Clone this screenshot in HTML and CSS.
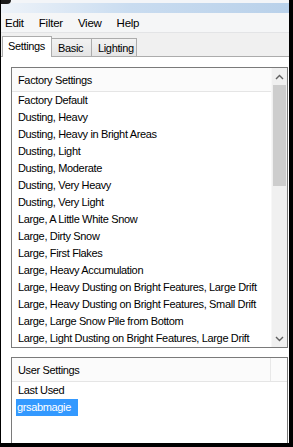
FILE: index.html
```html
<!DOCTYPE html>
<html>
<head>
<meta charset="utf-8">
<link rel="stylesheet" href="styles.css">
</head>
<body>
<div class="win">
  <div class="titlebar"><span class="corner"></span></div>
  <div class="menubar">
    <span class="menu-item">Edit</span>
    <span class="menu-item">Filter</span>
    <span class="menu-item">View</span>
    <span class="menu-item">Help</span>
  </div>
  <div class="tabs">
    <div class="tab active">Settings</div>
    <div class="tab">Basic</div>
    <div class="tab">Lighting</div>
  </div>
  <div class="panel">
    <div class="listbox factory">
      <div class="lb-main">
        <div class="lb-head"><span class="col">Factory Settings</span></div>
        <ul class="lb-items">
          <li>Factory Default</li>
          <li>Dusting, Heavy</li>
          <li>Dusting, Heavy in Bright Areas</li>
          <li>Dusting, Light</li>
          <li>Dusting, Moderate</li>
          <li>Dusting, Very Heavy</li>
          <li>Dusting, Very Light</li>
          <li>Large, A Little White Snow</li>
          <li>Large, Dirty Snow</li>
          <li>Large, First Flakes</li>
          <li>Large, Heavy Accumulation</li>
          <li>Large, Heavy Dusting on Bright Features, Large Drift</li>
          <li>Large, Heavy Dusting on Bright Features, Small Drift</li>
          <li>Large, Large Snow Pile from Bottom</li>
          <li>Large, Light Dusting on Bright Features, Large Drift</li>
        </ul>
      </div>
      <div class="scrollbar">
        <div class="sb-btn"><svg width="9" height="6" viewBox="0 0 9 6"><path d="M1 5 L4.5 1.5 L8 5" fill="none" stroke="#606060" stroke-width="1.4"/></svg></div>
        <div class="sb-thumb"></div>
        <div class="sb-track"></div>
        <div class="sb-btn"><svg width="9" height="6" viewBox="0 0 9 6"><path d="M1 1 L4.5 4.5 L8 1" fill="none" stroke="#606060" stroke-width="1.4"/></svg></div>
      </div>
    </div>
    <div class="listbox user">
      <div class="lb-main">
        <div class="lb-head"><span class="col">User Settings</span></div>
        <ul class="lb-items">
          <li>Last Used</li>
          <li><span class="sel">grsabmagie</span></li>
        </ul>
      </div>
    </div>
  </div>
</div>
</body>
</html>
```

FILE: styles.css
```css
* { box-sizing: border-box; }
html, body { margin: 0; padding: 0; }
body {
  background: #000;
  width: 293px;
  height: 447px;
  overflow: hidden;
  font-family: "Liberation Sans", Arial, sans-serif;
  font-size: 11px;
  letter-spacing: -0.35px;
  color: #000;
}
.win {
  position: relative;
  margin-left: 1px;
  width: 288px;
  height: 443px;
  background: #f0f0f0;
  display: flex;
  flex-direction: column;
  overflow: hidden;
}
.titlebar {
  height: 13px;
  border-top: 3px solid #f3f5f8;
  background: linear-gradient(to right, #eef3f9 0%, #c9dcf0 45%, #b9d1ea 100%);
  position: relative;
}
.corner {
  position: absolute;
  left: -1px;
  top: -3px;
  width: 11px;
  height: 4px;
  background: #1b1b1b;
  border-radius: 0 0 5px 0;
}
.menubar {
  height: 20px;
  background: #f5f6f7;
  border-bottom: 1px solid #e3e4e6;
  display: flex;
  align-items: center;
  gap: 15px;
  padding-left: 4px;
  font-size: 11.5px;
  letter-spacing: -0.25px;
}
.tabs {
  height: 24px;
  display: flex;
  align-items: flex-end;
  padding-left: 1px;
  border-bottom: 1px solid #acacac;
}
.tab {
  height: 18px;
  border: 1px solid #acacac;
  border-bottom: none;
  background: linear-gradient(#f2f2f2, #e5e5e5);
  padding: 0 6px;
  display: flex;
  align-items: center;
  margin-left: -1px;
}
.tab:nth-child(2) { width: 41px; }
.tab:nth-child(3) { width: 46px; }
.tab.active {
  height: 21px;
  width: 50px;
  margin-left: 0;
  margin-bottom: -1px;
  background: #fff;
  padding: 0 5px 2px;
  position: relative;
  z-index: 1;
}
.panel {
  flex: 1;
  background: #fff;
  padding: 10px 1px 0 10px;
  display: flex;
  flex-direction: column;
  gap: 9px;
  overflow: hidden;
}
.listbox {
  border: 1px solid #7a7a7a;
  display: flex;
  background: #fff;
}
.factory { height: 285px; }
.user { height: 100px; flex-shrink: 0; }
.lb-main { flex: 1; min-width: 0; }
.lb-head {
  height: 24px;
  background: #fbfbfb;
  border-bottom: 1px solid #e5e5e5;
  display: flex;
}
.col {
  width: 259px;
  padding-left: 6px;
  padding-top: 1px;
  display: flex;
  align-items: center;
}
.user .col { border-right: 1px solid #e8e8e8; }
.lb-items {
  list-style: none;
  margin: 0;
  padding: 0;
}
.lb-items li {
  height: 17px;
  line-height: 17px;
  padding-left: 6px;
  white-space: nowrap;
}
.user .lb-items li { padding-left: 4px; }
.user .lb-items li:first-child { padding-left: 6px; }
.sel {
  display: inline-block;
  background: #3399ff;
  color: #fff;
  padding: 0 1px 0 1px;
  width: 62px;
}
.scrollbar {
  width: 16px;
  background: #f0f0f0;
  display: flex;
  flex-direction: column;
  border-left: 1px solid #f7f7f7;
}
.sb-btn {
  height: 17px;
  display: flex;
  align-items: center;
  justify-content: center;
}
.sb-thumb {
  height: 101px;
  margin: 0 1px;
  background: #cdcdcd;
}
.sb-track { flex: 1; }
```
